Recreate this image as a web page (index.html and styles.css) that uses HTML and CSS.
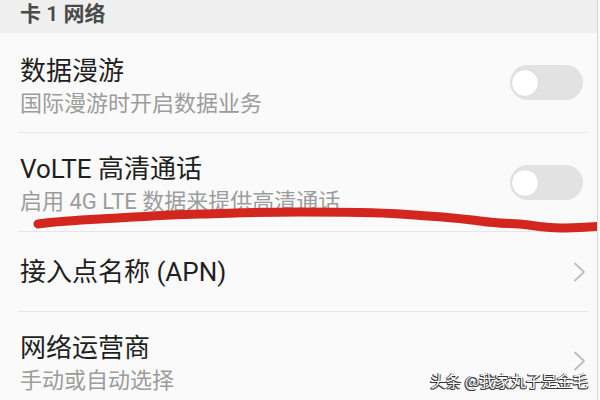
FILE: index.html
```html
<!DOCTYPE html>
<html lang="zh-CN">
<head>
<meta charset="utf-8">
<link rel="stylesheet" href="styles.css">
</head>
<body>
<div class="screen">
  <div class="section-header">卡 1 网络</div>
  <div class="list">
    <div class="row row-first">
      <div class="text">
        <div class="title">数据漫游</div>
        <div class="sub">国际漫游时开启数据业务</div>
      </div>
      <div class="toggle"><span class="knob"></span></div>
    </div>
    <div class="row">
      <div class="text">
        <div class="title">VoLTE 高清通话</div>
        <div class="sub">启用 4G LTE 数据来提供高清通话</div>
      </div>
      <div class="toggle"><span class="knob"></span></div>
    </div>
    <div class="row row-single">
      <div class="text">
        <div class="title">接入点名称 (APN)</div>
      </div>
      <svg class="chevron" width="13" height="20" viewBox="0 0 13 20"><path d="M2 1.5 L11 10 L2 18.5" fill="none" stroke="#bdbdbd" stroke-width="1.8" stroke-linecap="round" stroke-linejoin="round"/></svg>
    </div>
    <div class="row row-last">
      <div class="text">
        <div class="title">网络运营商</div>
        <div class="sub">手动或自动选择</div>
      </div>
      <svg class="chevron" width="13" height="20" viewBox="0 0 13 20"><path d="M2 1.5 L11 10 L2 18.5" fill="none" stroke="#bdbdbd" stroke-width="1.8" stroke-linecap="round" stroke-linejoin="round"/></svg>
    </div>
  </div>
  <svg class="scribble" width="600" height="400" viewBox="0 0 600 400">
    <path d="M38 224 C 60 221, 80 220, 100 219 S 160 215, 200 214 S 260 212, 300 212 S 370 212, 400 214 S 460 218, 480 221 S 510 223, 520 224 S 545 228, 560 228 S 585 227, 605 226" fill="none" stroke="#d3261f" stroke-width="9" stroke-linecap="round" stroke-linejoin="round"/>
  </svg>
  <div class="watermark">头条 @我家丸子是金毛</div>
</div>
</body>
</html>
```
FILE: styles.css
```css
html, body {
  margin: 0;
  padding: 0;
  overflow: hidden;
  background: #fbfbfb;
}
body {
  font-family: "Roboto", "Noto Sans CJK SC", sans-serif;
}
.screen {
  position: relative;
  width: 597px;
  height: 400px;
  border-right: 1px solid #d6d6d6;
  background: #fafafa;
  overflow: hidden;
}
.section-header {
  height: 33px;
  background: #efefef;
  color: #4a4a4a;
  font-size: 21px;
  font-weight: 600;
  line-height: 28px;
  padding-left: 20px;
}
.list {
  display: flex;
  flex-direction: column;
}
.row {
  display: flex;
  align-items: center;
  margin: 0 9px 0 18px;
  padding: 0 5px 0 2px;
  border-bottom: 1px solid #e6e6e6;
}
.text {
  flex: 1;
  padding: 20px 0 13px;
}
.row-first .text {
  padding-top: 22px;
  padding-bottom: 12px;
}
.row-single .text {
  padding: 24px 0 23px;
}
.row-last {
  border-bottom: none;
}
.title {
  font-size: 26px;
  line-height: 32px;
  color: #1f1f1f;
}
.sub {
  font-size: 22px;
  line-height: 33px;
  color: #9c9c9c;
}
.toggle {
  position: relative;
  width: 73px;
  height: 35px;
  border-radius: 18px;
  background: #e2e2e2;
}
.knob {
  position: absolute;
  left: 1px;
  top: 4px;
  width: 26px;
  height: 26px;
  border-radius: 50%;
  background: #ffffff;
  border: 1px solid #dadada;
}
.chevron {
  display: block;
  margin-right: -3px;
}
.scribble {
  position: absolute;
  left: 0;
  top: 0;
  pointer-events: none;
}
.watermark {
  position: absolute;
  right: 9px;
  bottom: 11px;
  font-family: "Noto Sans CJK SC", sans-serif;
  font-size: 15.5px;
  line-height: 18px;
  color: #ffffff;
  text-shadow: -1px 1px 0 #333, 1px 1px 0 #555, -1px 0 0 #333, 0 1px 0 #333;
}
```
